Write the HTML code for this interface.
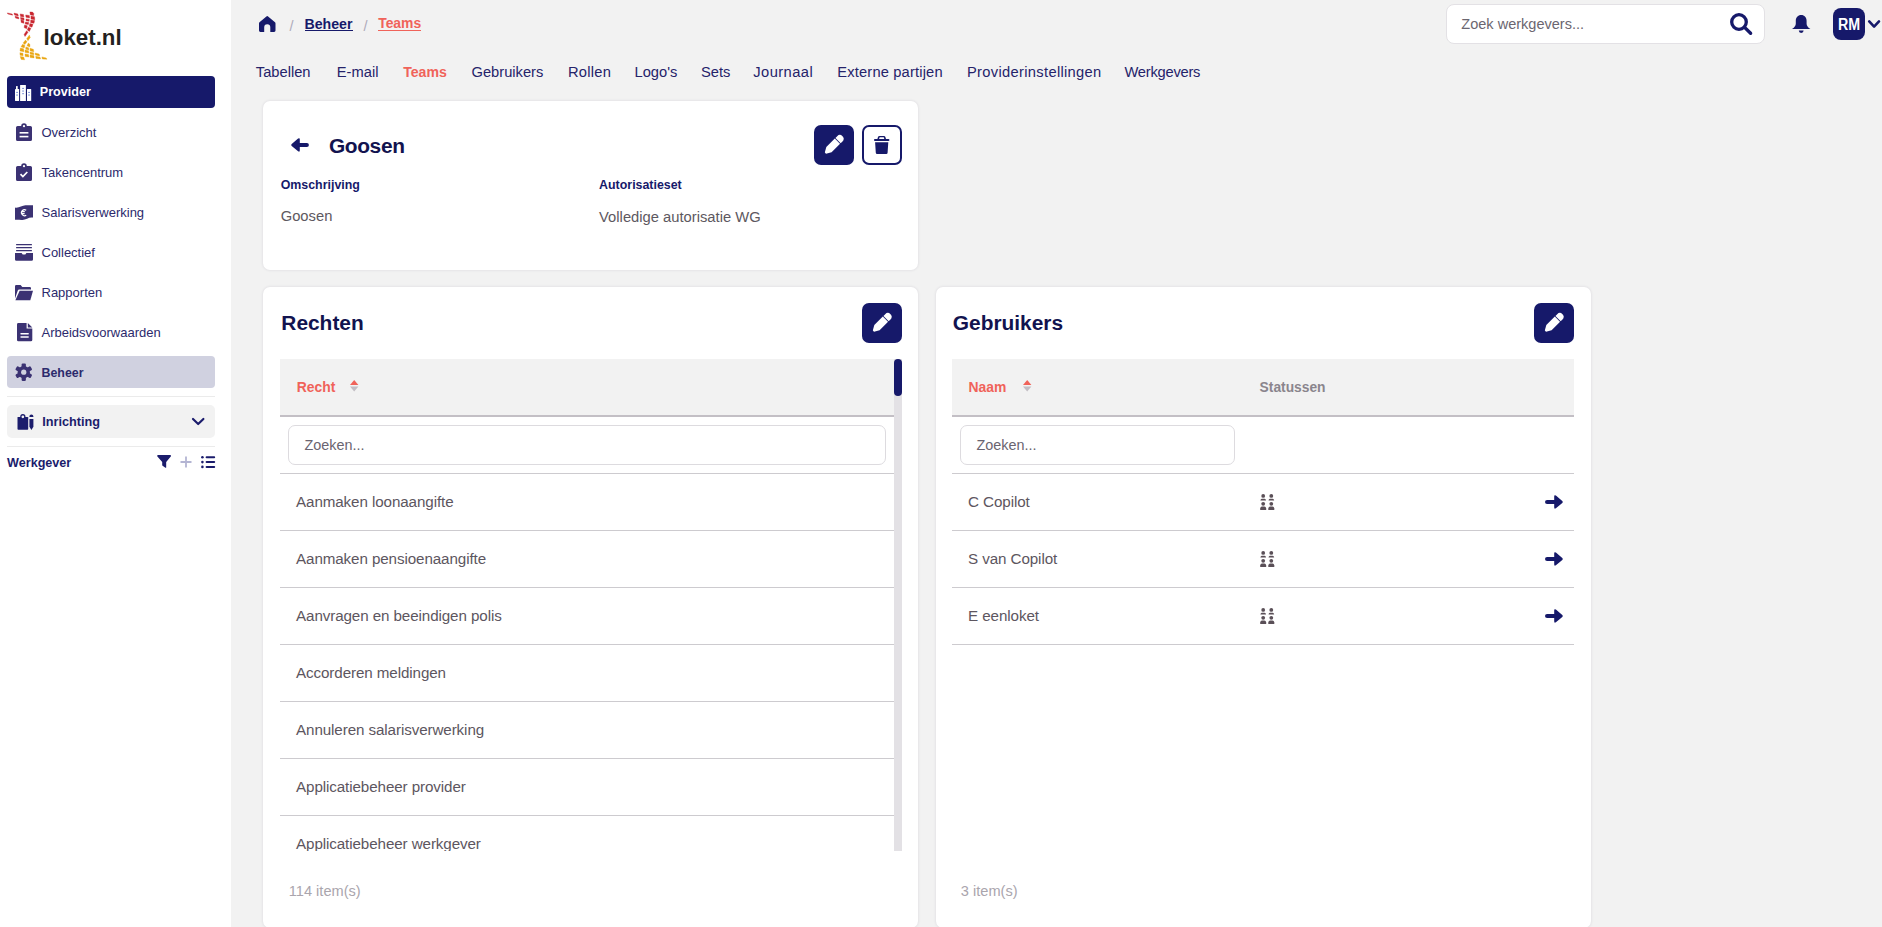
<!DOCTYPE html>
<html><head><meta charset="utf-8">
<style>
*{box-sizing:border-box;margin:0;padding:0}
html,body{width:1882px;height:927px;overflow:hidden;background:#f2f2f2;font-family:"Liberation Sans",sans-serif}
.a{position:absolute;white-space:nowrap;line-height:1}
svg{position:absolute;overflow:visible}
.mi{font-size:13px;color:#2c2a6c}
.tab{font-size:14.7px;color:#25236a;top:64.6px}
.card{position:absolute;background:#fff;border-radius:7px;box-shadow:0 0 3px rgba(50,30,70,.13)}
.ttl{font-size:20.9px;font-weight:bold;color:#12134f}
.btn{position:absolute;width:40px;height:40px;border-radius:7px;background:#16196a}
.lbl{font-size:12.4px;font-weight:bold;color:#16196a}
.val{font-size:14.75px;color:#5d5860}
.th{font-size:13.9px;font-weight:bold}
.inp{position:absolute;height:40px;background:#fff;border:1px solid #dddbdf;border-radius:7px}
.ph{font-size:14.4px;color:#6a6470}
.rt{font-size:15.2px;color:#5d5660;letter-spacing:-.1px}
.dv{position:absolute;height:1px;background:#cdcbcf}
.cnt{font-size:14.6px;color:#aaa5ad}
</style></head><body>
<!-- SIDEBAR -->
<div class="a" style="left:0;top:0;width:231px;height:927px;background:#fff"></div>
<!-- logo -->
<svg style="left:0;top:0" width="60" height="64" viewBox="0 0 60 64"><g fill="#c9252f" stroke="#c9252f" stroke-width=".35" stroke-linejoin="round"><polygon points="7.3,12.9 12.2,14.0 12.6,15.2 7.8,14.0"/><polygon points="14.0,13.1 17.8,13.9 18.3,16.0 14.5,15.1"/><polygon points="15.0,16.3 18.5,17.0 18.9,18.9 15.5,18.1"/><polygon points="20.2,13.9 23.5,14.5 23.8,17.0 20.5,16.4"/><polygon points="20.5,17.4 23.9,17.9 24.1,20.0 20.8,19.5"/><polygon points="20.9,20.0 23.8,20.6 23.9,23.3 21.2,22.5"/><polygon points="25.7,14.9 29.3,15.5 29.6,17.9 26.0,17.3"/><polygon points="26.0,18.9 29.3,19.4 29.2,21.3 26.0,20.8"/><polygon points="25.4,22.0 28.8,22.4 28.4,24.6 25.2,24.0"/><polygon points="24.6,24.9 27.3,25.8 26.6,28.8 24.1,27.6"/><polygon points="29.9,11.9 32.5,12.1 33.8,13.5 33.7,15.5 30.3,14.9"/><polygon points="30.9,16.1 34.5,16.7 34.8,19.7 31.0,19.1"/><polygon points="30.7,20.0 34.6,20.6 34.0,23.3 30.6,22.7"/><polygon points="29.8,23.6 33.0,24.2 32.0,27.2 29.3,26.3"/><polygon points="28.3,27.2 30.9,28.3 29.4,31.4 27.3,30.0"/><polygon points="26.6,30.7 28.0,32.2 25.0,36.5 24.1,34.4"/></g><g fill="#e9a510" stroke="#e9a510" stroke-width=".35" stroke-linejoin="round"><polygon points="29.4,35.1 30.2,37.5 28.0,40.7 26.7,38.8"/><polygon points="25.5,40.1 27.0,41.8 24.8,44.6 23.1,42.9"/><polygon points="22.6,44.3 24.9,45.4 24.2,47.9 21.0,46.8"/><polygon points="20.4,48.0 23.6,48.8 23.9,51.7 20.0,51.0"/><polygon points="19.9,52.7 23.0,53.2 23.1,55.8 20.1,55.3"/><polygon points="20.2,56.6 23.6,57.0 24.7,59.8 21.2,59.4"/><polygon points="28.3,43.0 30.0,44.4 29.8,46.9 27.0,45.8"/><polygon points="25.9,46.9 28.6,47.8 28.9,50.0 25.7,49.3"/><polygon points="25.0,50.1 28.5,50.8 28.9,53.0 25.2,52.6"/><polygon points="25.0,54.0 28.5,54.5 28.9,56.9 25.2,56.6"/><polygon points="30.0,48.2 33.4,49.3 33.8,51.7 30.2,51.0"/><polygon points="30.0,52.1 33.6,52.8 33.9,54.7 30.2,54.2"/><polygon points="30.0,55.1 33.8,55.6 34.1,57.9 30.2,57.6"/><polygon points="35.1,53.0 39.2,54.1 39.6,55.9 35.4,55.1"/><polygon points="35.7,56.3 40.0,57.1 40.6,58.9 36.0,58.5"/><polygon points="41.9,56.9 46.2,57.9 47.0,59.2 42.3,59.0"/></g></svg>
<div class="a" style="left:43.6px;top:26.5px;font-size:22.3px;font-weight:bold;color:#231f20">loket.nl</div>

<!-- Provider -->
<div class="a" style="left:7px;top:76px;width:208px;height:32px;border-radius:4px;background:#16196a"></div>
<svg style="left:15px;top:85px" width="17" height="16" viewBox="0 0 17 16">
 <g fill="#fff"><rect x="0" y="4.1" width="4.1" height="11.9" rx=".4"/><rect x="1" y=".9" width="1.7" height="3.6" rx=".5"/><rect x="5.1" y="0" width="5.8" height="16" rx=".3"/><rect x="12" y="4" width="4.2" height="12" rx=".3"/></g>
 <g fill="#7d93d8"><rect x="1.2" y="6.9" width="1.7" height="1.1"/><rect x="1.2" y="9.5" width="1.7" height="1.1"/><rect x="7.2" y="2.9" width="1.7" height="1.1"/><rect x="7.2" y="5.5" width="1.7" height="1.1"/><rect x="7.2" y="8.1" width="1.7" height="1.1"/><rect x="13.2" y="6.9" width="1.7" height="1.1"/><rect x="13.2" y="9.5" width="1.7" height="1.1"/></g>
</svg>
<div class="a" style="left:39.8px;top:86.3px;font-size:12.6px;font-weight:bold;color:#fff">Provider</div>

<!-- menu items -->
<svg style="left:16px;top:123px" width="16" height="18" viewBox="0 0 16 18">
 <path fill="#3b3273" d="M1.6 3H5.2A2.8 2.8 0 0 1 10.8 3H14.4A1.6 1.6 0 0 1 16 4.6V16.4A1.6 1.6 0 0 1 14.4 18H1.6A1.6 1.6 0 0 1 0 16.4V4.6A1.6 1.6 0 0 1 1.6 3Z"/>
 <circle cx="8" cy="3.2" r="1.1" fill="#fff"/>
 <rect x="3.6" y="9" width="8.8" height="1.6" fill="#fff"/><rect x="3.6" y="12.8" width="8.8" height="1.6" fill="#fff"/>
</svg>
<div class="a mi" style="left:41.5px;top:126px">Overzicht</div>

<svg style="left:16px;top:163px" width="16" height="18" viewBox="0 0 16 18">
 <path fill="#3b3273" d="M1.6 3H5.2A2.8 2.8 0 0 1 10.8 3H14.4A1.6 1.6 0 0 1 16 4.6V16.4A1.6 1.6 0 0 1 14.4 18H1.6A1.6 1.6 0 0 1 0 16.4V4.6A1.6 1.6 0 0 1 1.6 3Z"/>
 <circle cx="8" cy="3.2" r="1.1" fill="#fff"/>
 <path d="M4.5 11.2l2.4 2.4 4.4-4.6" fill="none" stroke="#fff" stroke-width="1.7"/>
</svg>
<div class="a mi" style="left:41.5px;top:166px">Takencentrum</div>

<svg style="left:15px;top:204.5px" width="18" height="15" viewBox="0 0 18 15">
 <path fill="#3b3273" d="M0 2.5C3.5 3.4 7 .4 10.5.2 13 0 15.5.4 18 .2V12.6C14.5 11.7 11 14.7 7.5 14.9 5 15 2.5 14.6 0 14.8Z"/>
 <path d="M11.2 5.2A3 3 0 1 0 11.2 10.2M6.2 6.7H9.8M6.2 8.6H9.6" fill="none" stroke="#fff" stroke-width="1.3"/>
</svg>
<div class="a mi" style="left:41.5px;top:206px">Salarisverwerking</div>

<svg style="left:15px;top:243.5px" width="18" height="17" viewBox="0 0 18 17">
 <g fill="#3b3273"><rect x="1" y="0" width="16" height="1.3" rx=".6"/><rect x="1" y="3" width="16" height="1.3" rx=".6"/><rect x="1" y="6" width="16" height="1.3" rx=".6"/>
 <path d="M0 9H6.6L7.7 10.6H10.3L11.4 9H18V15.4A1.4 1.4 0 0 1 16.6 16.8H1.4A1.4 1.4 0 0 1 0 15.4Z"/></g>
</svg>
<div class="a mi" style="left:41.5px;top:246px">Collectief</div>

<svg style="left:15px;top:284.5px" width="18" height="15.5" viewBox="0 0 18 15.5">
 <path fill="#3b3273" d="M0 1.2A1.2 1.2 0 0 1 1.2 0H5.6L7.3 2H14.8A1.2 1.2 0 0 1 16 3.2V4.6H4.2A1.5 1.5 0 0 0 2.8 5.6L0 13.4Z"/>
 <path fill="#3b3273" d="M4.6 5.8H18L15.3 15.2H0.4Z"/>
</svg>
<div class="a mi" style="left:41.5px;top:286px">Rapporten</div>

<svg style="left:16.5px;top:322.7px" width="15.3" height="18.3" viewBox="0 0 15.3 18.3">
 <path fill="#3b3273" d="M1.4 0H9.6V5.6H15.3V16.9A1.4 1.4 0 0 1 13.9 18.3H1.4A1.4 1.4 0 0 1 0 16.9V1.4A1.4 1.4 0 0 1 1.4 0Z"/>
 <path fill="#3b3273" d="M10.8 0L15.3 4.5H10.8Z"/>
 <rect x="3.3" y="10" width="8.6" height="1.5" rx=".7" fill="#fff"/><rect x="3.3" y="13.3" width="8.6" height="1.5" rx=".7" fill="#fff"/>
</svg>
<div class="a mi" style="left:41.5px;top:326px">Arbeidsvoorwaarden</div>

<!-- Beheer -->
<div class="a" style="left:7px;top:356px;width:208px;height:32px;border-radius:4px;background:#d0d1e0"></div>
<svg style="left:15px;top:362.6px" width="17.5" height="18.4" viewBox="-9 -9 18 18">
 <g fill="#3b3273">
  <circle r="6.3"/>
  <rect x="-2.2" y="-9" width="4.4" height="18" rx="1.2"/>
  <rect x="-2.2" y="-9" width="4.4" height="18" rx="1.2" transform="rotate(60)"/>
  <rect x="-2.2" y="-9" width="4.4" height="18" rx="1.2" transform="rotate(120)"/>
 </g>
 <circle r="2.7" fill="#d0d1e0"/>
</svg>
<div class="a" style="left:41.5px;top:366.5px;font-size:12.4px;font-weight:bold;color:#2c2a6c">Beheer</div>

<div class="a" style="left:7px;top:396px;width:208px;height:1px;background:#ebebeb"></div>
<!-- Inrichting -->
<div class="a" style="left:7px;top:405px;width:208px;height:33px;border-radius:5px;background:#f2f2f2"></div>
<svg style="left:16.6px;top:414px" width="17" height="16" viewBox="0 0 17 16">
 <g fill="#1b1c6c">
  <rect x=".5" y="2.9" width="10.7" height="12.9" rx=".7"/>
  <circle cx="5.85" cy="2.7" r="2.6"/>
  <path d="M12.4 2.6A2 2 0 0 1 16.4 2.6V2.9H12.4Z"/>
  <path d="M12.4 4.9H16.4V12.7L14.4 15.9 12.4 12.7Z"/>
 </g>
 <circle cx="5.85" cy="2.8" r="1.35" fill="#f2f2f2"/>
</svg>
<div class="a" style="left:42.3px;top:416.4px;font-size:12.7px;font-weight:bold;color:#1b1c6c">Inrichting</div>
<svg style="left:192px;top:418px" width="12.4" height="7.4" viewBox="0 0 12.4 7.4"><path d="M1 1L6.2 6 11.4 1" fill="none" stroke="#1b1c6c" stroke-width="2.2" stroke-linecap="round" stroke-linejoin="round"/></svg>
<div class="a" style="left:7px;top:446px;width:208px;height:1px;background:#ebebeb"></div>

<div class="a" style="left:7.1px;top:457.4px;font-size:12.6px;font-weight:bold;color:#1b1c6c">Werkgever</div>
<svg style="left:157px;top:455px" width="14.2" height="13" viewBox="0 0 14.2 13"><path fill="#1b1c6c" d="M.2 1.2A1 1 0 0 1 1.1 0H13.1A1 1 0 0 1 14 1.2L9.2 7V12.2A.6.6 0 0 1 8.4 12.8L5.6 10.8A.7.7 0 0 1 5.2 10.2V7Z"/></svg>
<svg style="left:180px;top:455.8px" width="12" height="12" viewBox="0 0 12 12"><path d="M6 .5V11.5M.5 6H11.5" stroke="#b4b5d3" stroke-width="1.8"/></svg>
<svg style="left:201px;top:455.8px" width="14.2" height="12.2" viewBox="0 0 14.2 12.2">
 <g fill="#1b1c6c"><circle cx="1.4" cy="1.3" r="1.3"/><circle cx="1.4" cy="6.1" r="1.3"/><circle cx="1.4" cy="10.9" r="1.3"/>
 <rect x="4.6" y=".3" width="9.6" height="2" rx="1"/><rect x="4.6" y="5.1" width="9.6" height="2" rx="1"/><rect x="4.6" y="9.9" width="9.6" height="2" rx="1"/></g>
</svg>

<!-- HEADER -->
<svg style="left:258.8px;top:16px" width="16.5" height="16" viewBox="0 0 16.5 16"><path fill="#16196a" d="M7.4.4A1.3 1.3 0 0 1 9.1.4L16 6.3A1.6 1.6 0 0 1 16.5 7.4V14.6A1.4 1.4 0 0 1 15.1 16H11.3V11.2A2.9 2.9 0 0 0 5.2 11.2V16H1.4A1.4 1.4 0 0 1 0 14.6V7.4A1.6 1.6 0 0 1 .5 6.3Z"/></svg>
<div class="a" style="left:289.5px;top:18.8px;font-size:14.5px;color:#aeabbb">/</div>
<div class="a" style="left:304.5px;top:17.1px;font-size:14.16px;font-weight:bold;color:#16196a">Beheer</div>
<div class="a" style="left:304.5px;top:30px;width:48.3px;height:1.2px;background:#16196a"></div>
<div class="a" style="left:363.5px;top:18.8px;font-size:14.5px;color:#aeabbb">/</div>
<div class="a" style="left:378.2px;top:17.3px;font-size:13.9px;font-weight:bold;color:#f0635a">Teams</div>
<div class="a" style="left:378.2px;top:30px;width:43px;height:1.2px;background:#f0635a"></div>

<!-- search -->
<div class="a" style="left:1445.5px;top:4.2px;width:319px;height:39.4px;background:#fff;border:1px solid #e3e1e5;border-radius:8px"></div>
<div class="a" style="left:1461.3px;top:16.6px;font-size:14.54px;color:#6b6670">Zoek werkgevers...</div>
<svg style="left:1730px;top:12.6px" width="22.4" height="21.8" viewBox="0 0 22.4 21.8"><circle cx="9" cy="9" r="7.3" fill="none" stroke="#16196a" stroke-width="3.3"/><path d="M14.6 14.4L20.6 20.2" stroke="#16196a" stroke-width="3.4" stroke-linecap="round"/></svg>
<svg style="left:1791.9px;top:15px" width="18.4" height="18" viewBox="0 0 18.4 18"><path fill="#16196a" d="M9.2 0C12.5 0 14.6 2.5 14.6 5.8V8.5C14.6 10.4 15.6 12.2 18.4 14H0C2.8 12.2 3.8 10.4 3.8 8.5V5.8C3.8 2.5 5.9 0 9.2 0Z"/><path fill="#16196a" d="M6.8 15.6H11.6A2.4 2.4 0 0 1 6.8 15.6Z"/></svg>
<div class="a" style="left:1833px;top:8px;width:32px;height:32px;border-radius:8px;background:#16196a"></div>
<div class="a" style="left:1837.6px;top:17px;font-size:15.8px;font-weight:bold;color:#fff;transform:scaleX(.9);transform-origin:0 0">RM</div>
<svg style="left:1868px;top:19.8px" width="12.2" height="8.8" viewBox="0 0 12.2 8.8"><path d="M1.2 1.4L6.1 6.6 11 1.4" fill="none" stroke="#16196a" stroke-width="2.6" stroke-linecap="round" stroke-linejoin="round"/></svg>

<!-- tabs -->
<div class="a tab" style="left:255.8px">Tabellen</div>
<div class="a tab" style="left:336.8px">E-mail</div>
<div class="a tab" style="left:403.2px;color:#f0635a;font-weight:bold;font-size:14.1px;top:65.1px">Teams</div>
<div class="a tab" style="left:471.5px">Gebruikers</div>
<div class="a tab" style="left:568px;letter-spacing:.25px">Rollen</div>
<div class="a tab" style="left:634.5px">Logo's</div>
<div class="a tab" style="left:701px">Sets</div>
<div class="a tab" style="left:753.3px;letter-spacing:.43px">Journaal</div>
<div class="a tab" style="left:837.3px;letter-spacing:.16px">Externe partijen</div>
<div class="a tab" style="left:967px;letter-spacing:.32px">Providerinstellingen</div>
<div class="a tab" style="left:1124.5px;letter-spacing:-.24px">Werkgevers</div>

<!-- CARD 1 -->
<div class="card" style="left:263px;top:101px;width:655.3px;height:169px"></div>
<svg style="left:291px;top:138.2px" width="18" height="13.8" viewBox="0 0 18 13.8"><path fill="#16196a" d="M.7 5.9L7.1.6Q8.8-.7 8.8 1.6V4.9H15.9A2 2 0 0 1 15.9 8.9H8.8V12.2Q8.8 14.5 7.1 13.2L.7 7.9Q-.4 6.9.7 5.9Z"/></svg>
<div class="a ttl" style="left:328.9px;top:135.5px;font-size:20.9px;letter-spacing:-.35px">Goosen</div>
<div class="btn" style="left:814px;top:125px"></div>
<svg style="left:824.8px;top:136.3px" width="18.8" height="17.6" viewBox="0 0 18.8 17.6">
 <g transform="translate(0.4 17.2) rotate(-45)" fill="#fff"><path d="M0 -.5Q.1-1 .8-1.4L5 -3.7H17V3.7H5L.8 1.4Q.1 1 0 .5Z"/><path d="M17.9 -3.7H20.4A3.7 3.7 0 0 1 20.4 3.7H17.9Z"/></g>
</svg>
<div class="btn" style="left:862px;top:125px;background:#fff;border:2px solid #16196a"></div>
<svg style="left:874.4px;top:136px" width="15.4" height="18" viewBox="0 0 15.4 18">
 <path fill="#16196a" fill-rule="evenodd" d="M3.4 2.9L4 1.1A1.6 1.6 0 0 1 5.5 0H9.9A1.6 1.6 0 0 1 11.4 1.1L12 2.9H14.4A1 1 0 0 1 14.4 5H1A1 1 0 0 1 1 2.9ZM5.1 2.9H10.3L9.9 1.6Q9.8 1.3 9.5 1.3H5.9Q5.6 1.3 5.5 1.6Z"/>
 <path fill="#16196a" d="M1.1 6.2H14.3L13.6 16.8A1.3 1.3 0 0 1 12.3 18H3.1A1.3 1.3 0 0 1 1.8 16.8Z"/>
</svg>
<div class="a lbl" style="left:280.7px;top:179.2px">Omschrijving</div>
<div class="a val" style="left:280.7px;top:209.3px">Goosen</div>
<div class="a lbl" style="left:599.1px;top:179.2px">Autorisatieset</div>
<div class="a val" style="left:599.1px;top:209.5px">Volledige autorisatie WG</div>

<!-- CARD 2 -->
<div class="card" style="left:263px;top:287px;width:655.3px;height:640.5px"></div>
<div class="a ttl" style="left:281.3px;top:312.9px">Rechten</div>
<div class="btn" style="left:862px;top:303px"></div>
<svg style="left:872.8px;top:314.3px" width="18.8" height="17.6" viewBox="0 0 18.8 17.6">
 <g transform="translate(0.4 17.2) rotate(-45)" fill="#fff"><path d="M0 -.5Q.1-1 .8-1.4L5 -3.7H17V3.7H5L.8 1.4Q.1 1 0 .5Z"/><path d="M17.9 -3.7H20.4A3.7 3.7 0 0 1 20.4 3.7H17.9Z"/></g>
</svg>
<div class="a" style="left:280px;top:359px;width:614px;height:56px;background:#f2f2f2"></div>
<div class="a" style="left:280px;top:415px;width:614px;height:2px;background:#c3bfc5"></div>
<div class="a th" style="left:296.7px;top:380.7px;color:#f0635a">Recht</div>
<svg style="left:349.7px;top:380.2px" width="8.4" height="11.6" viewBox="0 0 8.4 11.6"><path fill="#f0635a" d="M4.2 0L8.4 5H0Z"/><path fill="#c2bdc4" d="M0 6.6H8.4L4.2 11.6Z"/></svg>
<div class="inp" style="left:288px;top:425px;width:597.5px"></div>
<div class="a ph" style="left:304.5px;top:437.7px">Zoeken...</div>
<div class="dv" style="left:280px;top:473px;width:614px"></div>
<div style="position:absolute;left:280px;top:474px;width:614px;height:377px;overflow:hidden">
 <div class="a rt" style="left:16px;top:20.1px">Aanmaken loonaangifte</div>
 <div class="dv" style="left:0;top:56px;width:614px"></div>
 <div class="a rt" style="left:16px;top:77.1px">Aanmaken pensioenaangifte</div>
 <div class="dv" style="left:0;top:113px;width:614px"></div>
 <div class="a rt" style="left:16px;top:134.1px">Aanvragen en beeindigen polis</div>
 <div class="dv" style="left:0;top:170px;width:614px"></div>
 <div class="a rt" style="left:16px;top:191.1px">Accorderen meldingen</div>
 <div class="dv" style="left:0;top:227px;width:614px"></div>
 <div class="a rt" style="left:16px;top:248.1px">Annuleren salarisverwerking</div>
 <div class="dv" style="left:0;top:284px;width:614px"></div>
 <div class="a rt" style="left:16px;top:305.1px">Applicatiebeheer provider</div>
 <div class="dv" style="left:0;top:341px;width:614px"></div>
 <div class="a rt" style="left:16px;top:362.1px">Applicatiebeheer werkgever</div>
</div>
<!-- scrollbar -->
<div class="a" style="left:894px;top:359px;width:8px;height:492px;background:#e3e1e5"></div>
<div class="a" style="left:894px;top:359px;width:8px;height:37px;border-radius:4px;background:#16196a"></div>
<div class="a cnt" style="left:288.8px;top:883.6px">114 item(s)</div>

<!-- CARD 3 -->
<div class="card" style="left:935.5px;top:287px;width:655px;height:640.5px"></div>
<div class="a ttl" style="left:952.8px;top:312.9px">Gebruikers</div>
<div class="btn" style="left:1534px;top:303px"></div>
<svg style="left:1544.8px;top:314.3px" width="18.8" height="17.6" viewBox="0 0 18.8 17.6">
 <g transform="translate(0.4 17.2) rotate(-45)" fill="#fff"><path d="M0 -.5Q.1-1 .8-1.4L5 -3.7H17V3.7H5L.8 1.4Q.1 1 0 .5Z"/><path d="M17.9 -3.7H20.4A3.7 3.7 0 0 1 20.4 3.7H17.9Z"/></g>
</svg>
<div class="a" style="left:952px;top:359px;width:622px;height:56px;background:#f2f2f2"></div>
<div class="a" style="left:952px;top:415px;width:622px;height:2px;background:#c3bfc5"></div>
<div class="a th" style="left:968.5px;top:380.7px;color:#f0635a">Naam</div>
<svg style="left:1022.8px;top:380.2px" width="8.4" height="11.6" viewBox="0 0 8.4 11.6"><path fill="#f0635a" d="M4.2 0L8.4 5H0Z"/><path fill="#c2bdc4" d="M0 6.6H8.4L4.2 11.6Z"/></svg>
<div class="a th" style="left:1259.6px;top:380.9px;color:#8a858d;font-size:13.8px">Statussen</div>
<div class="inp" style="left:960px;top:425px;width:275px"></div>
<div class="a ph" style="left:976.5px;top:437.7px">Zoeken...</div>
<div class="dv" style="left:952px;top:473px;width:622px"></div>

<div class="a rt" style="left:968.1px;top:494.0px">C Copilot</div>
<div class="dv" style="left:952px;top:530px;width:622px"></div>
<div class="a rt" style="left:968.1px;top:551.0px">S van Copilot</div>
<div class="dv" style="left:952px;top:587px;width:622px"></div>
<div class="a rt" style="left:968.1px;top:608.0px">E eenloket</div>
<div class="dv" style="left:952px;top:644px;width:622px"></div>

<svg style="left:1259.7px;top:494.1px" width="14.6" height="16" viewBox="0 0 14.6 16"><g fill="#5a4f57"><circle cx="3.2" cy="1.9" r="1.9"/><circle cx="11.3" cy="1.9" r="1.9"/><circle cx="3.2" cy="9.8" r="1.9"/><circle cx="11.3" cy="9.8" r="1.9"/><path d="M.4 6.5Q.6 4.8 1.8 4.8H4.6Q5.9 4.8 6.1 6.5Z"/><path d="M8.5 6.5Q8.7 4.8 9.9 4.8H12.7Q14 4.8 14.2 6.5Z"/><path d="M.2 16V14.6Q.4 12.6 2 12.6H4.4Q6 12.6 6.2 14.6V16Z"/><path d="M8.3 16V14.6Q8.5 12.6 10.1 12.6H12.5Q14.1 12.6 14.3 14.6V16Z"/></g></svg>
<svg style="left:1544.9px;top:495.20000000000005px" width="18" height="13.6" viewBox="0 0 18 13.6"><path fill="#16196a" d="M17.3 5.9L10.9.6Q9.2-.7 9.2 1.6V4.9H2.1A2.1 2.1 0 0 0 2.1 9.1H9.2V12.2Q9.2 14.5 10.9 13.2L17.3 7.9Q18.4 6.9 17.3 5.9Z"/></svg>
<svg style="left:1259.7px;top:551.1px" width="14.6" height="16" viewBox="0 0 14.6 16"><g fill="#5a4f57"><circle cx="3.2" cy="1.9" r="1.9"/><circle cx="11.3" cy="1.9" r="1.9"/><circle cx="3.2" cy="9.8" r="1.9"/><circle cx="11.3" cy="9.8" r="1.9"/><path d="M.4 6.5Q.6 4.8 1.8 4.8H4.6Q5.9 4.8 6.1 6.5Z"/><path d="M8.5 6.5Q8.7 4.8 9.9 4.8H12.7Q14 4.8 14.2 6.5Z"/><path d="M.2 16V14.6Q.4 12.6 2 12.6H4.4Q6 12.6 6.2 14.6V16Z"/><path d="M8.3 16V14.6Q8.5 12.6 10.1 12.6H12.5Q14.1 12.6 14.3 14.6V16Z"/></g></svg>
<svg style="left:1544.9px;top:552.2px" width="18" height="13.6" viewBox="0 0 18 13.6"><path fill="#16196a" d="M17.3 5.9L10.9.6Q9.2-.7 9.2 1.6V4.9H2.1A2.1 2.1 0 0 0 2.1 9.1H9.2V12.2Q9.2 14.5 10.9 13.2L17.3 7.9Q18.4 6.9 17.3 5.9Z"/></svg>
<svg style="left:1259.7px;top:608.1px" width="14.6" height="16" viewBox="0 0 14.6 16"><g fill="#5a4f57"><circle cx="3.2" cy="1.9" r="1.9"/><circle cx="11.3" cy="1.9" r="1.9"/><circle cx="3.2" cy="9.8" r="1.9"/><circle cx="11.3" cy="9.8" r="1.9"/><path d="M.4 6.5Q.6 4.8 1.8 4.8H4.6Q5.9 4.8 6.1 6.5Z"/><path d="M8.5 6.5Q8.7 4.8 9.9 4.8H12.7Q14 4.8 14.2 6.5Z"/><path d="M.2 16V14.6Q.4 12.6 2 12.6H4.4Q6 12.6 6.2 14.6V16Z"/><path d="M8.3 16V14.6Q8.5 12.6 10.1 12.6H12.5Q14.1 12.6 14.3 14.6V16Z"/></g></svg>
<svg style="left:1544.9px;top:609.2px" width="18" height="13.6" viewBox="0 0 18 13.6"><path fill="#16196a" d="M17.3 5.9L10.9.6Q9.2-.7 9.2 1.6V4.9H2.1A2.1 2.1 0 0 0 2.1 9.1H9.2V12.2Q9.2 14.5 10.9 13.2L17.3 7.9Q18.4 6.9 17.3 5.9Z"/></svg>
<div class="a cnt" style="left:960.8px;top:883.6px">3 item(s)</div>
</body></html>
